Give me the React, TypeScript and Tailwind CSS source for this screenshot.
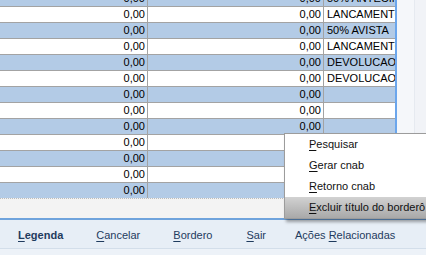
const rows: { a: string; b: string; c: string }[] = [
  { a: "0,00", b: "0,00", c: "50% ANTECIPADO" },
  { a: "0,00", b: "0,00", c: "LANCAMENTO MANUAL" },
  { a: "0,00", b: "0,00", c: "50% AVISTA" },
  { a: "0,00", b: "0,00", c: "LANCAMENTO MANUAL" },
  { a: "0,00", b: "0,00", c: "DEVOLUCAO" },
  { a: "0,00", b: "0,00", c: "DEVOLUCAO" },
  { a: "0,00", b: "0,00", c: "" },
  { a: "0,00", b: "0,00", c: "" },
  { a: "0,00", b: "0,00", c: "" },
  { a: "0,00", b: "0,00", c: "" },
  { a: "0,00", b: "0,00", c: "" },
  { a: "0,00", b: "0,00", c: "" },
  { a: "0,00", b: "0,00", c: "" },
];

const menuItems = [
  { key: "P", rest: "esquisar" },
  { key: "G", rest: "erar cnab" },
  { key: "R", rest: "etorno cnab" },
  { key: "E", rest: "xcluir título do borderô", active: true },
];

function Mnemonic({ k, rest }: { k: string; rest: string }) {
  return (
    <span>
      <span className="underline underline-offset-2">{k}</span>
      {rest}
    </span>
  );
}

export default function App() {
  return (
    <div
      className="relative w-[426px] h-[255px] overflow-hidden bg-white text-[11px] text-black"
      style={{ fontFamily: '"Liberation Sans", Arial, sans-serif' }}
    >
      <div className="flex h-[198px]">
        {/* grid */}
        <div className="w-[395px] h-full overflow-hidden">
          <div className="-mt-[9px]">
            {rows.map((r, i) => (
              <div
                key={i}
                className={`flex h-[16px] border-b border-[#a3a3a3] leading-[15px] ${
                  i % 2 === 0 ? "bg-[#b3cbe6]" : "bg-white"
                }`}
              >
                <div className="w-[148px] shrink-0 border-r border-[#a3a3a3] pr-[2px] text-right">
                  {r.a}
                </div>
                <div className="w-[176px] shrink-0 border-r border-[#a3a3a3] pr-[2px] text-right">
                  {r.b}
                </div>
                <div className="w-[71px] shrink-0 overflow-hidden whitespace-nowrap pl-[3px]">
                  {r.c}
                </div>
              </div>
            ))}
          </div>
        </div>
        {/* side */}
        <div className="flex flex-1 border-l-2 border-[#6ba6ec] bg-[#f5f7fa]">
          <div className="w-[18px] border-r border-[#e6eaf0]" />
          <div className="flex-1 bg-[#f1f3f7]" />
        </div>
      </div>

      {/* dotted area */}
      <div className="h-[20px] w-[395px] border-t border-dotted border-[#bdbdbd] bg-[#f3f3f3]" />

      {/* button bar */}
      <div className="h-[30px] border-t-2 border-[#6fa3dc] bg-[#e7eef6] flex items-center pt-[3px] pl-[18px] text-[#1f3b5e]">
        <span className="font-bold">
          <Mnemonic k="L" rest="egenda" />
        </span>
        <span className="ml-[33px]">
          <Mnemonic k="C" rest="ancelar" />
        </span>
        <span className="ml-[33px]">
          <Mnemonic k="B" rest="ordero" />
        </span>
        <span className="ml-[34px]">
          <Mnemonic k="S" rest="air" />
        </span>
        <span className="ml-[29px]">
          Ações <Mnemonic k="R" rest="elacionadas" />
        </span>
      </div>
      <div className="h-[7px] border-t border-[#d3deea] bg-[#edf2f8]" />

      {/* context menu */}
      <div className="absolute left-[284px] top-[133px] w-[160px] border border-[#9c9c9c] bg-white shadow-[2px_3px_3px_rgba(0,0,0,0.35)]">
        {menuItems.map((m) => (
          <div
            key={m.key}
            className={`h-[21px] flex items-center pl-[24px] whitespace-nowrap text-[#111] ${
              m.active ? "bg-gradient-to-b from-[#d2d2d2] to-[#a9a9a9]" : ""
            }`}
          >
            <Mnemonic k={m.key} rest={m.rest} />
          </div>
        ))}
      </div>
    </div>
  );
}
